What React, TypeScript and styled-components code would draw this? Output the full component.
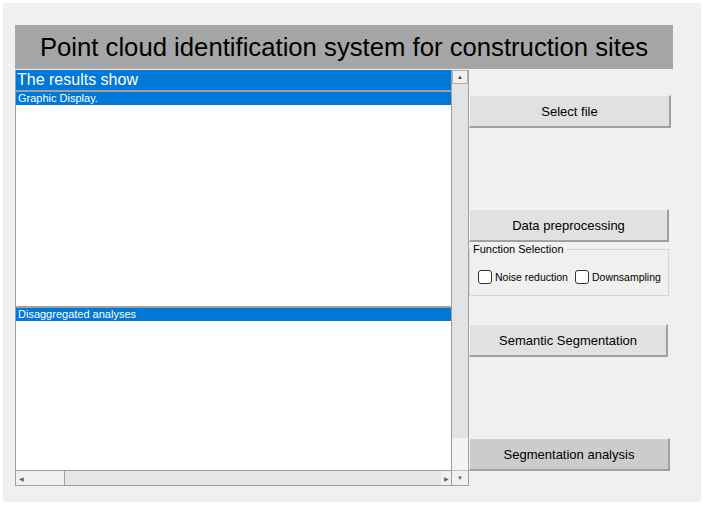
import React from "react";
import styled, { createGlobalStyle } from "styled-components";

const GlobalStyle = createGlobalStyle`
  body {
    margin: 0;
    background: #ffffff;
    font-family: "Liberation Sans", Arial, sans-serif;
  }
`;

const Frame = styled.div`
  margin: 3px;
  width: 698px;
  height: 499px;
  box-sizing: border-box;
  background: #f0f0f0;
  padding: 22px 0 0 12px;
`;

const TitleBar = styled.div`
  width: 658px;
  height: 44px;
  background: #a6a6a6;
  display: flex;
  align-items: center;
  justify-content: center;
  font-size: 25.7px;
  color: #000;
`;

const Body = styled.div`
  display: flex;
  margin-top: 1px;
`;

const ListPanel = styled.div`
  display: flex;
  width: 454px;
  height: 416px;
  border-left: 1px solid #a0a0a0;
  box-sizing: border-box;
`;

const ContentColumn = styled.div`
  flex: 1;
  display: flex;
  flex-direction: column;
`;

const ListArea = styled.div`
  flex: 1;
  background: #ffffff;
  display: flex;
  flex-direction: column;
`;

const Header = styled.div`
  height: 20px;
  line-height: 20px;
  background: #0078d7;
  color: #fff;
  font-size: 16px;
  padding-left: 1px;
  border-bottom: 2px solid #a0a0a0;
`;

const Row = styled.div`
  height: 13px;
  line-height: 13px;
  background: #0078d7;
  color: #fff;
  font-size: 11px;
  padding-left: 2px;
`;

const Blank = styled.div<{ $h: number }>`
  height: ${(p) => p.$h}px;
  background: #fff;
`;

const Divider = styled.div`
  height: 2px;
  background: #a0a0a0;
`;

const HScroll = styled.div`
  height: 16px;
  display: flex;
  background: #e6e6e6;
  border-bottom: 1px solid #a0a0a0;
  box-sizing: border-box;
  border-top: 1px solid #a0a0a0;
`;

const HArrow = styled.div`
  width: 10px;
  display: flex;
  align-items: center;
  justify-content: center;
  background: #f0f0f0;
  font-size: 6px;
  color: #606060;
`;

const HThumb = styled.div`
  width: 38px;
  background: #f0f0f0;
  border-right: 1px solid #a0a0a0;
`;

const HTrack = styled.div`
  flex: 1;
`;

const VScroll = styled.div`
  width: 18px;
  display: flex;
  flex-direction: column;
  background: #e3e3e3;
  border-left: 1px solid #a0a0a0;
  border-right: 1px solid #a0a0a0;
  box-sizing: border-box;
`;

const VArrow = styled.div`
  height: 12px;
  display: flex;
  align-items: center;
  justify-content: center;
  background: #f0f0f0;
  border: 1px solid #b0b0b0;
  font-size: 6px;
  color: #404040;
`;

const VTrack = styled.div`
  flex: 1;
`;

const VThumb = styled.div`
  height: 32px;
  background: #f4f4f4;
`;

const VBottom = styled.div`
  height: 14px;
  display: flex;
  align-items: center;
  justify-content: center;
  background: #f0f0f0;
  border-top: 1px solid #c0c0c0;
  border-bottom: 1px solid #a0a0a0;
  font-size: 6px;
  color: #606060;
`;

const SideColumn = styled.div`
  display: flex;
  flex-direction: column;
`;

const Button = styled.div<{ $w: number; $top: number; $dark?: boolean }>`
  width: ${(p) => p.$w}px;
  height: 33px;
  margin-top: ${(p) => p.$top}px;
  box-sizing: border-box;
  background: ${(p) => (p.$dark ? "#cccccc" : "#e1e1e1")};
  border-top: 1px solid #f4f4f4;
  border-left: 1px solid #f4f4f4;
  border-right: 2px solid #a0a0a0;
  border-bottom: 2px solid #a0a0a0;
  display: flex;
  align-items: center;
  justify-content: center;
  font-size: 13px;
  color: #000;
`;

const GroupBox = styled.fieldset`
  width: 200px;
  height: 53px;
  margin: 1px 0 0 0;
  padding: 0 0 0 8px;
  box-sizing: border-box;
  border: 1px solid #d5d5d5;
  font-size: 11px;
  color: #000;

  legend {
    padding: 0 2px 0 1px;
    margin-left: -6px;
    font-size: 11px;
    line-height: 13px;
  }
`;

const CheckRow = styled.div`
  display: flex;
  align-items: center;
  gap: 7px;
  margin-top: 14px;
  white-space: nowrap;
`;

const CheckLabel = styled.label`
  display: flex;
  align-items: center;
  gap: 3px;
  font-size: 10.5px;
`;

const Box = styled.span`
  width: 12px;
  height: 12px;
  border: 1px solid #333;
  border-radius: 3px;
  background: #fff;
`;

export default function App() {
  return (
    <>
      <GlobalStyle />
      <Frame>
        <TitleBar>Point cloud identification system for construction sites</TitleBar>
        <Body>
          <ListPanel>
            <ContentColumn>
              <ListArea>
                <Header>The results show</Header>
                <Row>Graphic Display.</Row>
                <Blank $h={201} />
                <Divider />
                <Row>Disaggregated analyses</Row>
                <Blank $h={149} />
              </ListArea>
              <HScroll>
                <HArrow>◀</HArrow>
                <HThumb />
                <HTrack />
                <HArrow>▶</HArrow>
              </HScroll>
            </ContentColumn>
            <VScroll>
              <VArrow>▲</VArrow>
              <VTrack />
              <VThumb />
              <VBottom>▼</VBottom>
            </VScroll>
          </ListPanel>
          <SideColumn>
            <Button $w={202} $top={25}>Select file</Button>
            <Button $w={200} $top={81}>Data preprocessing</Button>
            <GroupBox>
              <legend>Function Selection</legend>
              <CheckRow>
                <CheckLabel>
                  <Box />
                  Noise reduction
                </CheckLabel>
                <CheckLabel>
                  <Box />
                  Downsampling
                </CheckLabel>
              </CheckRow>
            </GroupBox>
            <Button $w={199} $top={28}>Semantic Segmentation</Button>
            <Button $w={201} $top={81} $dark>Segmentation analysis</Button>
          </SideColumn>
        </Body>
      </Frame>
    </>
  );
}
